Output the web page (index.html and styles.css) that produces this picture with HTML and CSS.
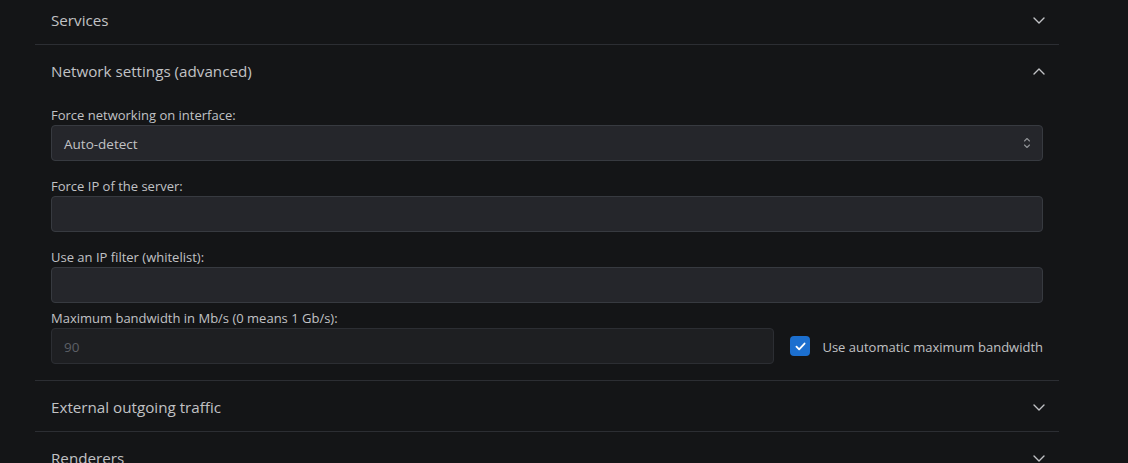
FILE: index.html
```
<!DOCTYPE html>
<html lang="en">
<head>
<meta charset="utf-8">
<title>Settings</title>
<link rel="stylesheet" href="styles.css">
</head>
<body>
<div class="page">
  <div class="accordion">
    <div class="item">
      <div class="control">
        <span class="title">Services</span>
        <svg class="chev" viewBox="0 0 12 7" width="12" height="7"><path d="M1 1l5 5 5-5" fill="none" stroke="currentColor" stroke-width="1.4" stroke-linecap="round" stroke-linejoin="round"/></svg>
      </div>
    </div>
    <div class="item">
      <div class="control">
        <span class="title">Network settings (advanced)</span>
        <svg class="chev" viewBox="0 0 12 7" width="12" height="7"><path d="M1 6l5-5 5 5" fill="none" stroke="currentColor" stroke-width="1.4" stroke-linecap="round" stroke-linejoin="round"/></svg>
      </div>
      <div class="content">
        <div class="field">
          <label class="label">Force networking on interface:</label>
          <div class="input select">
            <span class="value">Auto-detect</span>
            <svg class="updown" viewBox="0 0 8 14" width="8" height="14"><path d="M1.5 5l2.5-2.5 2.5 2.5M1.5 9l2.5 2.5 2.5-2.5" fill="none" stroke="currentColor" stroke-width="1.1" stroke-linecap="round" stroke-linejoin="round"/></svg>
          </div>
        </div>
        <div class="field">
          <label class="label">Force IP of the server:</label>
          <div class="input"></div>
        </div>
        <div class="field">
          <label class="label">Use an IP filter (whitelist):</label>
          <div class="input"></div>
        </div>
        <div class="field last">
          <label class="label">Maximum bandwidth in Mb/s (0 means 1 Gb/s):</label>
          <div class="row">
            <div class="input disabled"><span class="value">90</span></div>
            <div class="check">
              <span class="box"><svg viewBox="0 0 12 10" width="11" height="9"><path d="M1.5 5.2l3 3 6-6.5" fill="none" stroke="#fff" stroke-width="2" stroke-linecap="round" stroke-linejoin="round"/></svg></span>
              <span class="check-label">Use automatic maximum bandwidth</span>
            </div>
          </div>
        </div>
      </div>
    </div>
    <div class="item">
      <div class="control">
        <span class="title">External outgoing traffic</span>
        <svg class="chev" viewBox="0 0 12 7" width="12" height="7"><path d="M1 1l5 5 5-5" fill="none" stroke="currentColor" stroke-width="1.4" stroke-linecap="round" stroke-linejoin="round"/></svg>
      </div>
    </div>
    <div class="item">
      <div class="control">
        <span class="title">Renderers</span>
        <svg class="chev" viewBox="0 0 12 7" width="12" height="7"><path d="M1 1l5 5 5-5" fill="none" stroke="currentColor" stroke-width="1.4" stroke-linecap="round" stroke-linejoin="round"/></svg>
      </div>
    </div>
  </div>
</div>
</body>
</html>
```
FILE: styles.css
```
html, body {
  margin: 0;
  padding: 0;
  background: #141517;
  height: 100%;
  overflow: hidden;
}
body {
  font-family: "Open Sans", "Noto Sans", sans-serif;
  color: #c1c2c5;
}
.page {
  width: 1024px;
  margin-left: 35px;
  margin-top: -6px;
}
.item {
  border-bottom: 1px solid #2c2e33;
}
.control {
  height: 50px;
  display: flex;
  align-items: center;
  justify-content: space-between;
  padding: 0 16px;
}
.title {
  font-size: 15.2px;
  padding-top: 2px;
  color: #c1c2c5;
}
.chev {
  color: #c1c2c5;
  margin-right: -2px;
  margin-top: 2px;
}
.content {
  padding: 9px 16px 16px;
  display: flex;
  flex-direction: column;
  gap: 14px;
}
.field {
  display: flex;
  flex-direction: column;
}
.field.last {
  margin-top: -10px;
}
.label {
  font-size: 13px;
  line-height: 20px;
  padding-top: 1px;
  color: #c1c2c5;
}
.input {
  height: 36px;
  box-sizing: border-box;
  background: #25262b;
  border: 1px solid #373a40;
  border-radius: 4px;
  display: flex;
  align-items: center;
  padding: 0 12px;
  font-size: 13.5px;
  color: #c1c2c5;
}
.value {
  padding-top: 2px;
}
.select {
  justify-content: space-between;
  padding-right: 11px;
}
.updown {
  color: #909296;
}
.row {
  display: flex;
  align-items: center;
  gap: 16px;
}
.row .input {
  flex: 1;
}
.input.disabled {
  background: #1e1f22;
  border-color: #2c2e33;
  color: #5c5f66;
}
.check {
  display: flex;
  align-items: center;
  gap: 12px;
}
.box {
  width: 20px;
  height: 20px;
  border-radius: 4px;
  background: #1c6fcf;
  display: flex;
  align-items: center;
  justify-content: center;
}
.check-label {
  font-size: 13px;
  padding-top: 1px;
  color: #c1c2c5;
}
```
